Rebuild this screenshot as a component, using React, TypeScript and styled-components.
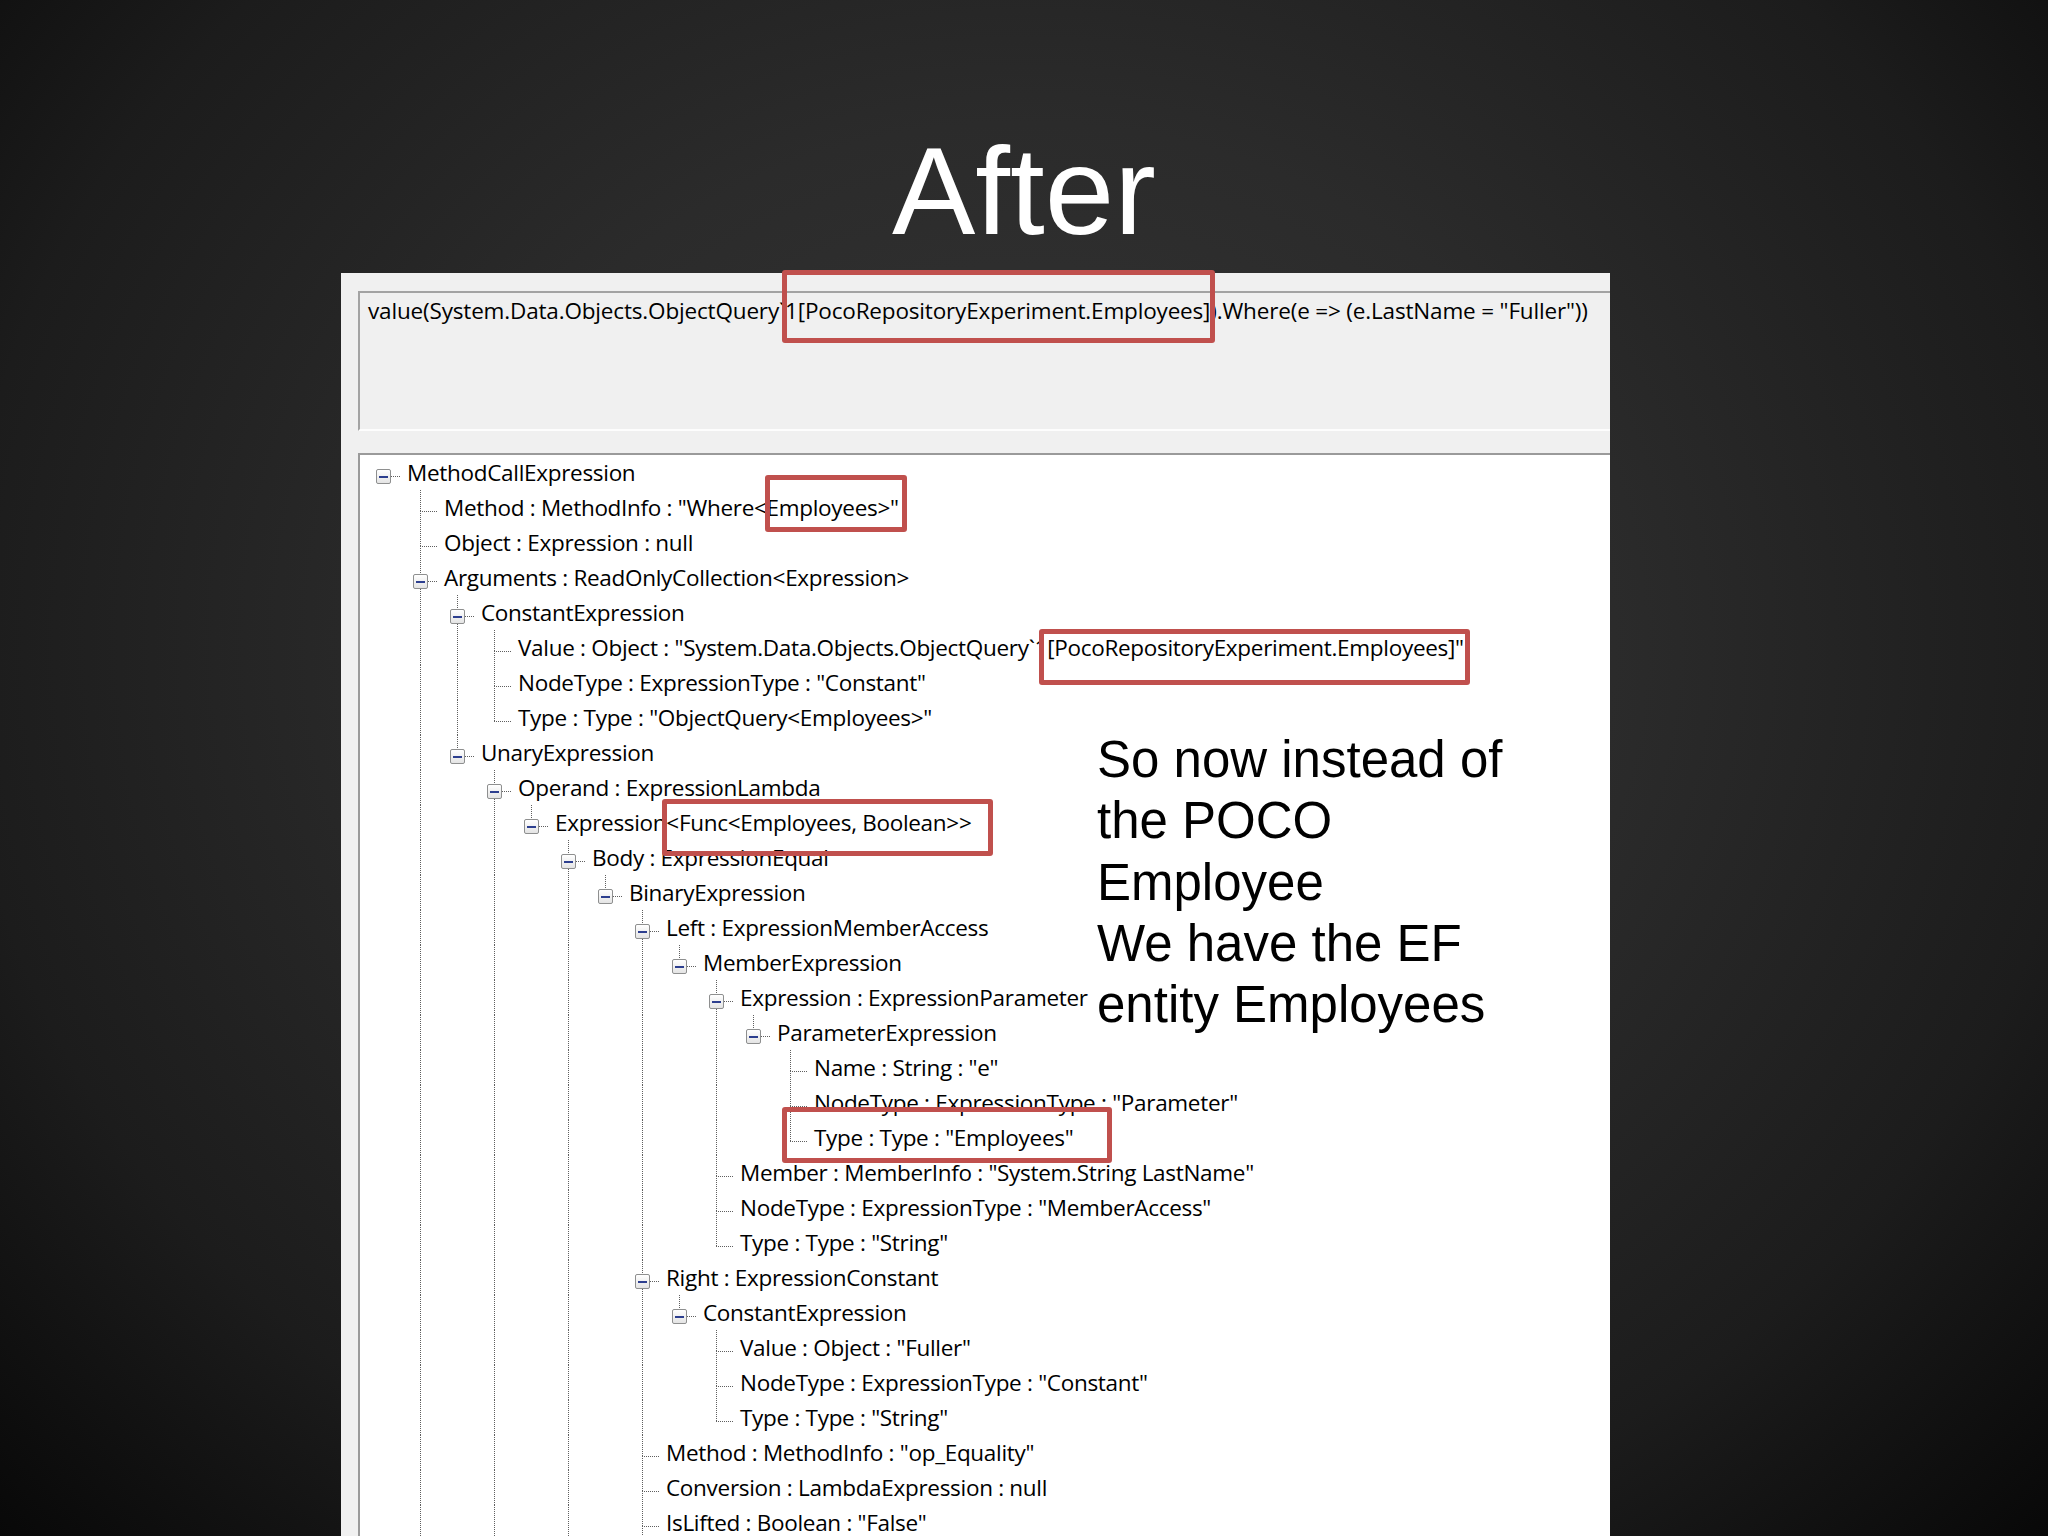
import React from 'react';
import styled, { createGlobalStyle } from 'styled-components';

const COL = 37;
const ROW = 35;
const DOT = '#5f5f5f';
const dotV = `repeating-linear-gradient(to bottom, ${DOT} 0 1px, transparent 1px 2px)`;
const dotH = `repeating-linear-gradient(to right, ${DOT} 0 1px, transparent 1px 2px)`;

const GlobalStyle = createGlobalStyle`
  html, body {
    margin: 0;
    padding: 0;
    background: #000;
  }
  body {
    overflow: hidden;
  }
`;

const Slide = styled.div`
  position: relative;
  width: 2048px;
  height: 1536px;
  overflow: hidden;
  display: flex;
  flex-direction: column;
  background: radial-gradient(
    ellipse 72% 85% at 50% 42%,
    #363636 0%,
    #2b2b2b 40%,
    #1c1c1c 72%,
    #060606 100%
  );
`;

const Title = styled.h1`
  margin: 0;
  padding-top: 128px;
  height: 125px;
  font-family: 'Liberation Sans', Arial, sans-serif;
  font-weight: normal;
  font-size: 125px;
  line-height: 125px;
  color: #fff;
  text-align: center;
`;

const Window = styled.div`
  margin: 20px 0 0 341px;
  width: 1269px;
  flex: 1;
  box-sizing: border-box;
  padding: 18px 0 0 17px;
  background: #f0f0f0;
  overflow: hidden;
  display: flex;
  flex-direction: column;
`;

const QueryBox = styled.div`
  flex: none;
  height: 140px;
  margin-right: -6px;
  box-sizing: border-box;
  padding-left: 8px;
  border-top: 2px solid #a3a3a3;
  border-left: 2px solid #a3a3a3;
  border-bottom: 2px solid #fdfdfd;
  background: #f0f0f0;
`;

const UiText = styled.span`
  font-family: 'Open Sans', 'Noto Sans', sans-serif;
  font-size: 22.5px;
  letter-spacing: -0.3px;
  line-height: ${ROW}px;
  color: #000;
  white-space: nowrap;
`;

const QueryText = styled(UiText)`
  letter-spacing: -0.17px;
`;

const TreeBox = styled.div`
  flex: 1;
  margin-top: 22px;
  margin-right: -6px;
  background: #fff;
  border-top: 2px solid #9a9a9a;
  border-left: 2px solid #9a9a9a;
`;

const Row = styled.div`
  display: flex;
  align-items: flex-start;
  height: ${ROW}px;
  padding-left: 5px;
`;

const GuideCell = styled.div<{ $line: boolean }>`
  flex: none;
  width: ${COL}px;
  height: 100%;
  background: ${(p) => (p.$line ? `${dotV} no-repeat 18px 0 / 1px 100%` : 'none')};
`;

const BranchCell = styled.div<{ $up: boolean; $down: boolean }>`
  flex: none;
  width: ${COL}px;
  height: 100%;
  box-sizing: border-box;
  padding-top: 14px;
  display: flex;
  justify-content: center;
  align-items: flex-start;
  background: ${(p) =>
    [
      `${dotH} no-repeat 18px 21px / 18px 1px`,
      p.$up ? `${dotV} no-repeat 18px 0 / 1px 21px` : null,
      p.$down ? `${dotV} no-repeat 18px 21px / 1px ${ROW - 21}px` : null,
    ]
      .filter(Boolean)
      .join(', ')};
`;

const Expander = styled.div`
  width: 15px;
  height: 15px;
  box-sizing: border-box;
  border: 1px solid #8e8f8f;
  border-radius: 2px;
  background: linear-gradient(#ffffff, #e4e4e4);
  display: flex;
  justify-content: center;
  align-items: center;
`;

const Minus = styled.div`
  width: 9px;
  height: 2px;
  background: #2d3f8f;
`;

const Label = styled(UiText)`
  margin-left: 5px;
`;

const Highlight = styled.div<{ $x: number; $y: number; $w: number; $h: number }>`
  position: absolute;
  left: ${(p) => p.$x}px;
  top: ${(p) => p.$y}px;
  width: ${(p) => p.$w}px;
  height: ${(p) => p.$h}px;
  box-sizing: border-box;
  border: 5px solid #c0504d;
  border-radius: 3px;
`;

const Callout = styled.div`
  position: absolute;
  left: 1097px;
  top: 729px;
  font-family: 'Liberation Sans', Arial, sans-serif;
  font-size: 51px;
  line-height: 61.3px;
  color: #000;
  white-space: nowrap;
`;

type TreeNode = { label: string; children?: TreeNode[]; more?: boolean };

const leaf = (label: string, more = false): TreeNode => ({ label, more });

const tree: TreeNode = {
  label: 'MethodCallExpression',
  children: [
    leaf('Method : MethodInfo : "Where<Employees>"'),
    leaf('Object : Expression : null'),
    {
      label: 'Arguments : ReadOnlyCollection<Expression>',
      more: true,
      children: [
        {
          label: 'ConstantExpression',
          children: [
            leaf('Value : Object : "System.Data.Objects.ObjectQuery`1[PocoRepositoryExperiment.Employees]"'),
            leaf('NodeType : ExpressionType : "Constant"'),
            leaf('Type : Type : "ObjectQuery<Employees>"'),
          ],
        },
        {
          label: 'UnaryExpression',
          children: [
            {
              label: 'Operand : ExpressionLambda',
              more: true,
              children: [
                {
                  label: 'Expression<Func<Employees, Boolean>>',
                  children: [
                    {
                      label: 'Body : ExpressionEqual',
                      more: true,
                      children: [
                        {
                          label: 'BinaryExpression',
                          children: [
                            {
                              label: 'Left : ExpressionMemberAccess',
                              children: [
                                {
                                  label: 'MemberExpression',
                                  children: [
                                    {
                                      label: 'Expression : ExpressionParameter',
                                      children: [
                                        {
                                          label: 'ParameterExpression',
                                          children: [
                                            leaf('Name : String : "e"'),
                                            leaf('NodeType : ExpressionType : "Parameter"'),
                                            leaf('Type : Type : "Employees"'),
                                          ],
                                        },
                                      ],
                                    },
                                    leaf('Member : MemberInfo : "System.String LastName"'),
                                    leaf('NodeType : ExpressionType : "MemberAccess"'),
                                    leaf('Type : Type : "String"'),
                                  ],
                                },
                              ],
                            },
                            {
                              label: 'Right : ExpressionConstant',
                              children: [
                                {
                                  label: 'ConstantExpression',
                                  children: [
                                    leaf('Value : Object : "Fuller"'),
                                    leaf('NodeType : ExpressionType : "Constant"'),
                                    leaf('Type : Type : "String"'),
                                  ],
                                },
                              ],
                            },
                            leaf('Method : MethodInfo : "op_Equality"'),
                            leaf('Conversion : LambdaExpression : null'),
                            leaf('IsLifted : Boolean : "False"', true),
                          ],
                        },
                      ],
                    },
                  ],
                },
              ],
            },
          ],
        },
      ],
    },
  ],
};

type FlatRow = {
  label: string;
  level: number;
  guides: boolean[];
  hasNext: boolean;
  expandable: boolean;
};

function flatten(node: TreeNode, level: number, guides: boolean[], hasNext: boolean, out: FlatRow[]) {
  out.push({ label: node.label, level, guides, hasNext, expandable: !!node.children });
  const kids = node.children ?? [];
  kids.forEach((child, i) => {
    const next = i < kids.length - 1 || !!child.more;
    flatten(child, level + 1, [...guides, hasNext], next, out);
  });
}

const rows: FlatRow[] = [];
flatten(tree, 0, [], false, rows);

const highlights = [
  { x: 782, y: 270, w: 433, h: 73 },
  { x: 765, y: 475, w: 142, h: 57 },
  { x: 1039, y: 629, w: 431, h: 56 },
  { x: 662, y: 799, w: 331, h: 57 },
  { x: 782, y: 1107, w: 330, h: 56 },
];

const App: React.FC = () => {
  return (
    <Slide>
      <GlobalStyle />
      <Title>After</Title>
      <Window>
        <QueryBox>
          <QueryText>
            value(System.Data.Objects.ObjectQuery`1[PocoRepositoryExperiment.Employees]).Where(e =&gt; (e.LastName = "Fuller"))
          </QueryText>
        </QueryBox>
        <TreeBox>
          {rows.map((row, i) => (
            <Row key={i}>
              {row.guides.map((g, k) => (
                <GuideCell key={k} $line={k > 0 && g} />
              ))}
              <BranchCell $up={row.level > 0} $down={row.hasNext}>
                {row.expandable && (
                  <Expander>
                    <Minus />
                  </Expander>
                )}
              </BranchCell>
              <Label>{row.label}</Label>
            </Row>
          ))}
        </TreeBox>
      </Window>
      {highlights.map((h, i) => (
        <Highlight key={i} $x={h.x} $y={h.y} $w={h.w} $h={h.h} />
      ))}
      <Callout>
        So now instead of
        <br />
        the POCO
        <br />
        Employee
        <br />
        We have the EF
        <br />
        entity Employees
      </Callout>
    </Slide>
  );
};

export default App;
